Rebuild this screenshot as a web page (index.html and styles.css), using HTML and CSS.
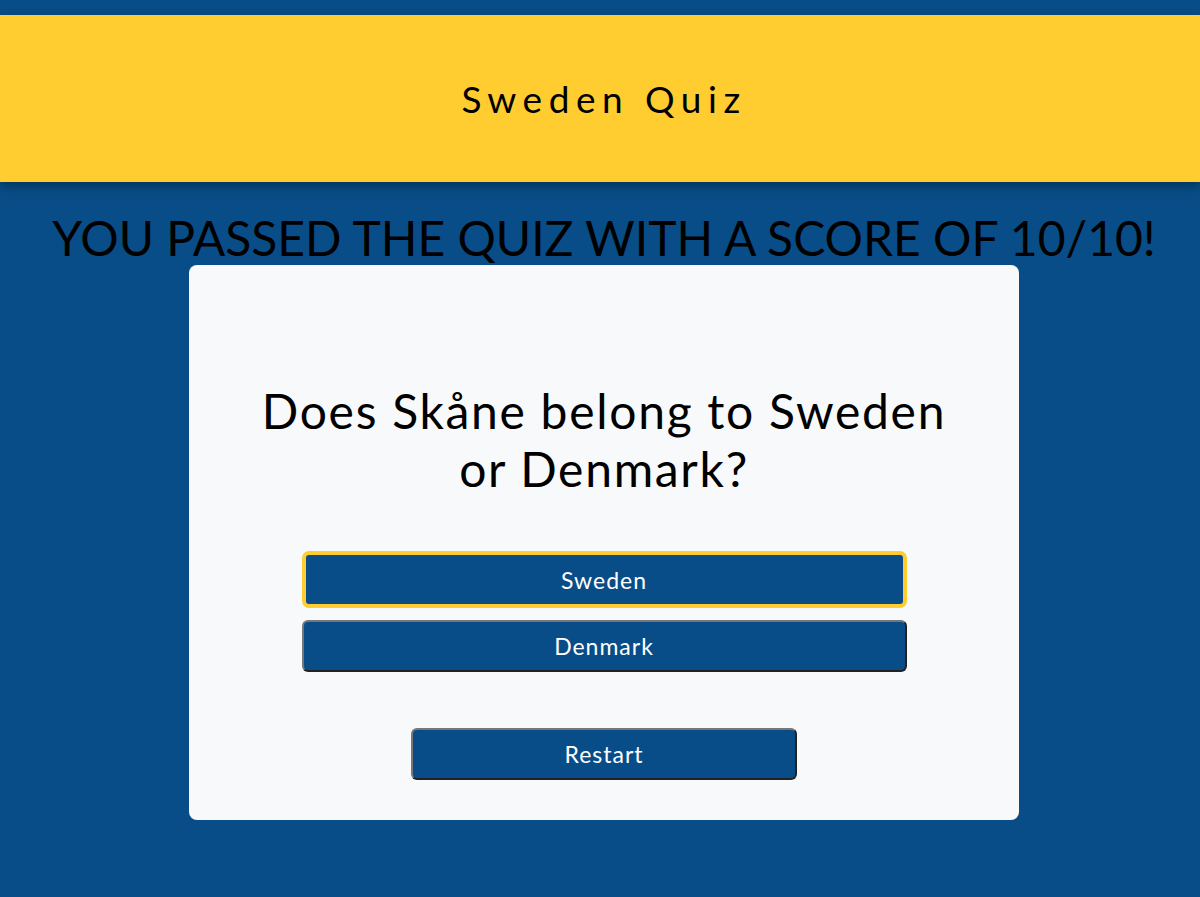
FILE: index.html
```html
<!DOCTYPE html>
<html lang="en">
<head>
<meta charset="utf-8">
<title>Sweden Quiz</title>
<link rel="stylesheet" href="styles.css">
</head>
<body>
<header class="site-header">
  <h1 class="site-title">Sweden Quiz</h1>
</header>
<main class="main">
  <h2 class="score">YOU PASSED THE QUIZ WITH A SCORE OF 10/10!</h2>
  <section class="card">
    <h3 class="question">Does Skåne belong to Sweden or Denmark?</h3>
    <div class="answers">
      <button class="btn answer selected">Sweden</button>
      <button class="btn answer">Denmark</button>
    </div>
    <button class="btn restart">Restart</button>
  </section>
</main>
</body>
</html>
```

FILE: styles.css
```css
html, body {
  margin: 0;
  padding: 0;
}
body {
  background: #084d87;
  font-family: "Lato", "Noto Sans", sans-serif;
  color: #000;
  height: 897px;
  overflow: hidden;
}
.site-header {
  margin-top: 15px;
  height: 167px;
  padding-left: 8px;
  background: #ffcd30;
  box-shadow: 0 4px 10px rgba(0, 0, 0, 0.35);
  display: flex;
  align-items: center;
  justify-content: center;
  position: relative;
}
.site-title {
  margin: 0;
  font-weight: 400;
  font-size: 37px;
  letter-spacing: 6.5px;
  line-height: 1;
}
.main {
  padding-left: 8px;
  display: flex;
  flex-direction: column;
  align-items: center;
}
.score {
  margin: 28px 0 0;
  font-weight: 400;
  font-size: 48px;
  line-height: 56px;
  text-align: center;
  white-space: nowrap;
}
.card {
  box-sizing: border-box;
  width: 830px;
  height: 555px;
  margin-top: -1px;
  background: #f7f9fb;
  border-radius: 8px;
  padding: 117px 0 0;
  display: flex;
  flex-direction: column;
  align-items: center;
}
.question {
  margin: 0;
  width: 700px;
  font-weight: 400;
  font-size: 48px;
  line-height: 58px;
  letter-spacing: 1.7px;
  text-align: center;
}
.answers {
  margin-top: 53px;
  display: flex;
  flex-direction: column;
  gap: 12px;
}
.btn {
  box-sizing: border-box;
  font-family: inherit;
  font-size: 23px;
  letter-spacing: 1px;
  color: #fff;
  background: #084d87;
  border: 2px solid;
  border-color: #777 #222 #222 #777;
  border-radius: 6px;
  padding: 0;
  cursor: pointer;
}
.answer {
  width: 605px;
  height: 52px;
}
.answer.selected {
  height: 57px;
  border: 4px solid #ffcd30;
  border-radius: 7px;
}
.restart {
  margin-top: 56px;
  width: 386px;
  height: 52px;
}
```
